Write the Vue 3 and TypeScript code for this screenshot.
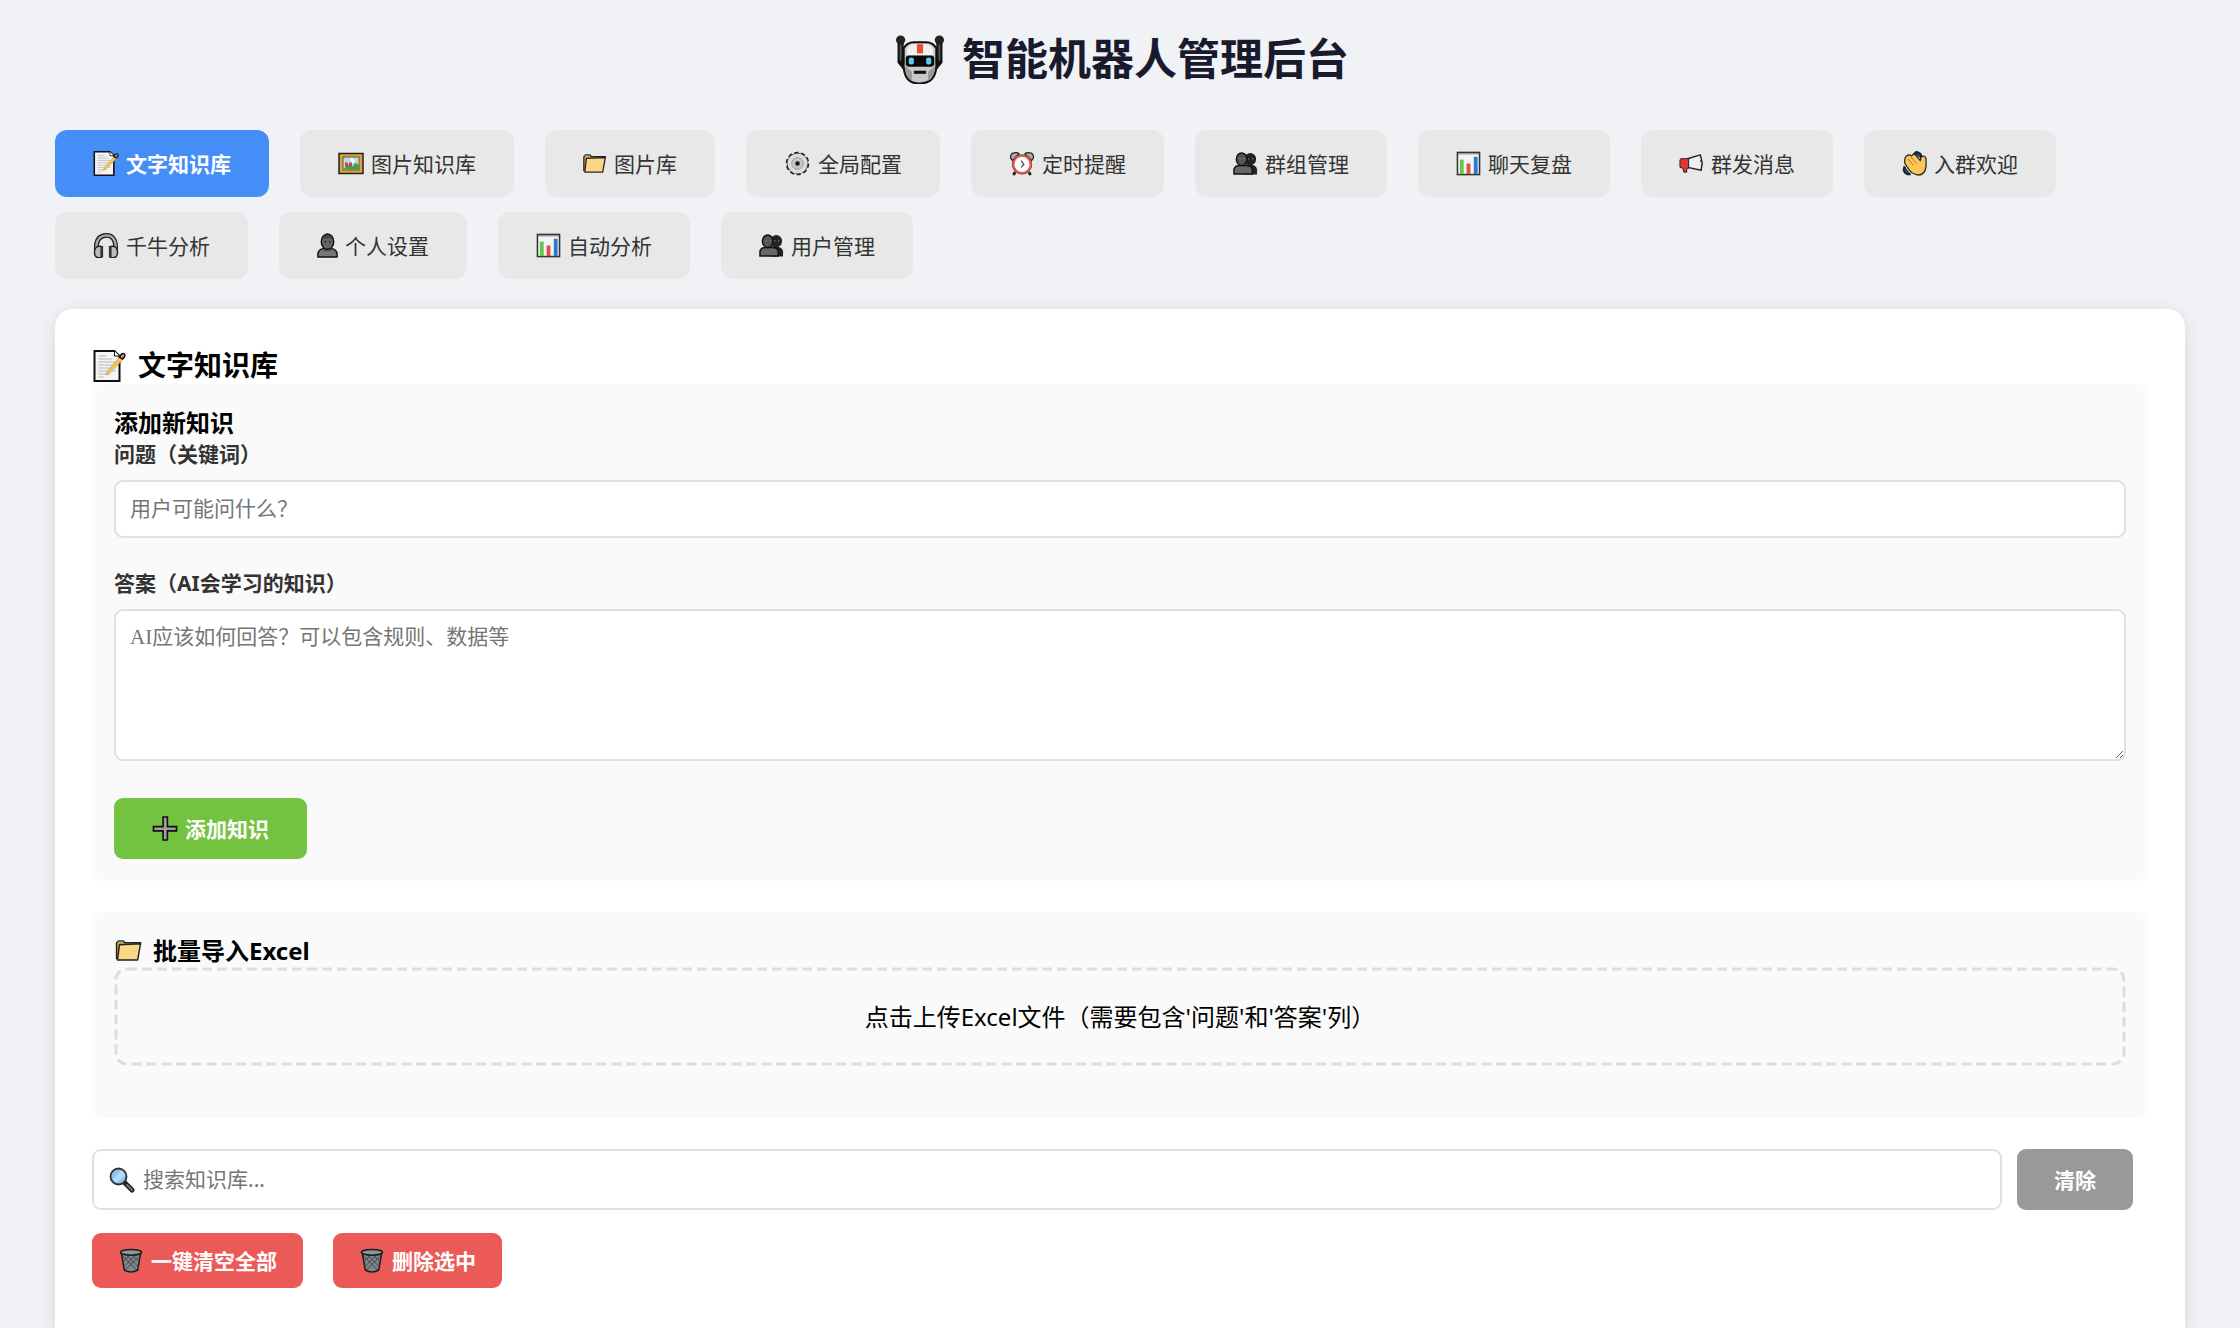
<script setup lang="ts">
import { ref } from 'vue'

interface Tab {
  id: string
  label: string
  icon: string
  width: number
}

const tabs: Tab[] = [
  { id: 'text', label: '文字知识库', icon: 'memo', width: 26 },
  { id: 'image', label: '图片知识库', icon: 'picture', width: 26 },
  { id: 'gallery', label: '图片库', icon: 'folder', width: 24 },
  { id: 'config', label: '全局配置', icon: 'gear', width: 27 },
  { id: 'timer', label: '定时提醒', icon: 'clock', width: 26 },
  { id: 'groups', label: '群组管理', icon: 'people', width: 25 },
  { id: 'review', label: '聊天复盘', icon: 'chart', width: 25 },
  { id: 'broadcast', label: '群发消息', icon: 'megaphone', width: 25 },
  { id: 'welcome', label: '入群欢迎', icon: 'wave', width: 25 },
  { id: 'qianniu', label: '千牛分析', icon: 'headphone', width: 26 },
  { id: 'profile', label: '个人设置', icon: 'person', width: 21 },
  { id: 'auto', label: '自动分析', icon: 'chart', width: 25 },
  { id: 'users', label: '用户管理', icon: 'people', width: 25 },
]

const active = ref('text')
const question = ref('')
const answer = ref('')
const keyword = ref('')
</script>

<template>
  <svg class="sprite" aria-hidden="true">
    <symbol id="robot" viewBox="0 0 48 48">
      <path d="M5 6v20l5 6M43 6v20l-5 6" fill="none" stroke="#111" stroke-width="6" />
      <path d="M5 8v17M43 8v17" stroke="#555" stroke-width="2" />
      <circle cx="5" cy="5" r="4.500" fill="#222" /><circle cx="43" cy="5" r="4.500" fill="#222" />
      <path d="M8 13q3-6 10-6h12q7 0 10 6v18q-1 16-16 16.500T8 31z" fill="#c9c9c9" stroke="#111" stroke-width="2" />
      <path d="M11 14q3-5 7-5h12q4 0 7 5v6H11z" fill="#f2f2f2" />
      <path d="M9 30l7 6v9q-6-3-7-15zM39 30l-7 6v9q6-3 7-15z" fill="#999" />
      <path d="M21 9h6v9h-6z" fill="#e8502e" />
      <rect x="10" y="20" width="28" height="11" rx="3" fill="#0a0a0a" />
      <rect x="13" y="22" width="5" height="7" rx="2" fill="#5cc9f5" /><rect x="30" y="22" width="5" height="7" rx="2" fill="#5cc9f5" />
      <rect x="18" y="35" width="12" height="3" fill="#111" />
    </symbol>
    <symbol id="memo" viewBox="0 0 32 32">
      <path d="M1 1h20l5 5v25H1z" fill="#f4f4f4" stroke="#111" stroke-width="2" />
      <path d="M5 6h8M5 9h14M5 12h17M5 15h17M5 18h17M5 21h17M5 24h12M5 27h5" stroke="#b5b5b5" stroke-width="1" />
      <path d="M21 1v5h5" fill="#fff" stroke="#111" />
      <path d="M12 25l2-4L27 6l3 3-14 14z" fill="#f6c452" stroke="#c89a3a" stroke-width=".6" />
      <path d="M26 7l2-3q2-1 3 0t0 3l-2 2z" fill="#c9958f" stroke="#111" stroke-width="1.500" />
    </symbol>
    <symbol id="picture" viewBox="0 0 26 24">
      <rect x="1" y="2" width="24" height="20" fill="#d9a53c" stroke="#222" stroke-width="1.500" />
      <rect x="5" y="5.500" width="16" height="13" fill="#b9dcf0" stroke="#6d5a2e" stroke-width="1" />
      <path d="M5.500 18l4-5 5 2 3-4 3.500 3v4.500z" fill="#4f9b45" />
      <path d="M7 11h3v4H7zM11 11h3v4h-3z" fill="#c24a3a" /><path d="M12 8l2-2 3 4-2 2z" fill="#fff" />
    </symbol>
    <symbol id="folder" viewBox="0 0 28 24">
      <path d="M1 21V4l2-2h5l2 2h16v2" fill="#e0a63c" stroke="#222" stroke-width="1.500" />
      <path d="M2 2.500h6" stroke="#3c7fb0" stroke-width="1.500" />
      <path d="M4 6l22-1-3 17H2z" fill="#fad784" stroke="#222" stroke-width="1.500" stroke-linejoin="round" />
    </symbol>
    <symbol id="gear" viewBox="0 0 26 26">
      <circle cx="13" cy="13" r="11" fill="#222" stroke="#222" stroke-width="2.500" stroke-dasharray="4.300 2.600" />
      <circle cx="13" cy="13" r="10.500" fill="#dcdcdc" />
      <circle cx="13" cy="13" r="6" fill="#c8c8c8" stroke="#999" />
      <circle cx="13" cy="13" r="2.400" fill="#111" stroke="#777" />
    </symbol>
    <symbol id="clock" viewBox="0 0 26 26">
      <path d="M6 22l-2 3M20 22l2 3" stroke="#222" stroke-width="3" />
      <path d="M1 7q0-5 4-5 3-1 5 1L3 10zM25 7q0-5-4-5-3-1-5 1l7 7z" fill="#aaa" stroke="#222" stroke-width="1.300" />
      <circle cx="13" cy="14" r="10" fill="#fff" stroke="#222" stroke-width="1" />
      <circle cx="13" cy="14" r="9" fill="#fff" stroke="#e5573c" stroke-width="2.200" />
      <path d="M12 10l3 4-3 3" fill="none" stroke="#444" stroke-width="1.300" />
    </symbol>
    <symbol id="people" viewBox="0 0 26 24">
      <path d="M12 23.500V13q12-1 13 5v5.500z" fill="#222" /><ellipse cx="18" cy="7.500" rx="6" ry="6.500" fill="#222" />
      <path d="M1 23v-5q1-4 6-4h7q5 0 6 4v5z" fill="#666" stroke="#111" stroke-width="1.500" />
      <ellipse cx="9" cy="7.500" rx="5.500" ry="6.500" fill="#555" stroke="#111" stroke-width="1.500" />
      <path d="M7 7h1M11 7h1M16 7h1M20 7h1" stroke="#888" stroke-width="1.500" />
    </symbol>
    <symbol id="person" viewBox="0 0 22 26">
      <path d="M1 25v-4q1-4 6-5h8q5 1 6 5v4z" fill="#777" stroke="#111" stroke-width="1.500" />
      <path d="M7 14h8v5H7z" fill="#555" />
      <ellipse cx="11" cy="9" rx="6.500" ry="8" fill="#666" stroke="#111" stroke-width="1.500" />
      <path d="M5 7q2-5 6-5t6 5q-6-3-12 0z" fill="#444" /><path d="M8 9h1.500M12.500 9H14" stroke="#111" stroke-width="1.500" />
    </symbol>
    <symbol id="chart" viewBox="0 0 26 26">
      <rect x="1.500" y="1.500" width="23" height="23" fill="#f4f4f4" stroke="#333" stroke-width="1.600" />
      <path d="M2 3h22" stroke="#777" stroke-width="1" />
      <path d="M4 9h4v15H4z" fill="#5ccb4b" /><path d="M11 13h4v11h-4z" fill="#e0523a" /><path d="M18.500 6h4v18h-4z" fill="#2f77d0" />
    </symbol>
    <symbol id="megaphone" viewBox="0 0 26 24">
      <path d="M9 7l13-4q3 8 1 16L9 16z" fill="#eee" stroke="#222" stroke-width="1.500" stroke-linejoin="round" />
      <path d="M2 7h8v10H8v4H5l-1-4-3-1V8z" fill="#e3342f" stroke="#222" stroke-width="1" />
      <path d="M22 9q4 2 1 5" fill="#ccc" stroke="#222" stroke-width="1.300" />
    </symbol>
    <symbol id="wave" viewBox="0 0 26 26">
      <path d="M12 4l3-3 4 2 2 5M3 16q-3 6 3 8l3 0" fill="#2f5161" stroke="#17262d" stroke-width="2.500" />
      <path d="M3 13q-1-6 2-8 2-2 5 0 2-3 5 0l4 5 1-4q4-2 5 2v8q-1 9-8 9-7-1-10-6z" fill="#fbc658" stroke="#222" stroke-width="1.300" stroke-linejoin="round" />
      <path d="M6 8l6 7M9 6l6 7" stroke="#a8792c" stroke-width="1" />
    </symbol>
    <symbol id="headphone" viewBox="0 0 26 26">
      <path d="M3 19V13q1-10 10-10.500T23 13v6" fill="none" stroke="#222" stroke-width="5" />
      <path d="M3 19V13q1-10 10-10.500T23 13v6" fill="none" stroke="#ababab" stroke-width="2.400" />
      <path d="M8 14q-7-1-7 6t7 5.500zM18 14q7-1 7 6t-7 5.500z" fill="#bbb" stroke="#222" stroke-width="1.500" />
      <path d="M8 13.500h2v12H8zM16 13.500h2v12h-2z" fill="#333" />
    </symbol>
    <symbol id="plus" viewBox="0 0 26 26">
      <path d="M11 1h4.500v10H25v4.500h-9.500V25H11v-9.500H1V11h10z" fill="#a0a0a0" stroke="#111" stroke-width="1.700" />
    </symbol>
    <symbol id="search" viewBox="0 0 26 26">
      <path d="M15 15l8 8" stroke="#222" stroke-width="5" stroke-linecap="round" />
      <path d="M18 18l5 5" stroke="#777" stroke-width="2" stroke-linecap="round" />
      <circle cx="9.500" cy="9.500" r="8" fill="#8fc3f0" stroke="#333" stroke-width="1.800" />
      <path d="M4 12L12 3.500q4 2 4 5L8 15.500q-3-1-4-3.500z" fill="#b5d9f7" />
    </symbol>
    <symbol id="trash" viewBox="0 0 26 26">
      <path d="M3 5l3 18q7 4 14 0l3-18z" fill="#7d878b" stroke="#1b1b1b" stroke-width="1.600" />
      <path d="M5 9l14 14M9 8l12 12M15 8l7 7M21 9L7 23M17 8L5 20M11 8l-6 6" stroke="#3c4447" stroke-width="1" />
      <ellipse cx="13" cy="4.500" rx="11" ry="3" fill="#8c979b" stroke="#1b1b1b" stroke-width="1.600" />
    </symbol>
  </svg>

  <div class="page">
    <h1 class="title"><svg class="title-icon"><use href="#robot" /></svg>智能机器人管理后台</h1>

    <nav class="tabs">
      <button
        v-for="tab in tabs"
        :key="tab.id"
        type="button"
        class="tab"
        :class="{ active: tab.id === active }"
        @click="active = tab.id"
      >
        <svg class="icon" :style="{ width: tab.width + 'px' }"><use :href="'#' + tab.icon" /></svg>{{ tab.label }}
      </button>
    </nav>

    <main class="card">
      <h2 class="card-title"><svg class="card-icon"><use href="#memo" /></svg>文字知识库</h2>

      <section class="section">
        <h3 class="section-title">添加新知识</h3>
        <label class="label" for="question">问题（关键词）</label>
        <input id="question" v-model="question" class="field" type="text" placeholder="用户可能问什么？" />
        <label class="label" for="answer">答案（AI会学习的知识）</label>
        <textarea id="answer" v-model="answer" class="field area" placeholder="AI应该如何回答？可以包含规则、数据等"></textarea>
        <button type="button" class="btn add"><svg class="icon"><use href="#plus" /></svg>添加知识</button>
      </section>

      <section class="section">
        <h3 class="section-title"><svg class="section-icon"><use href="#folder" /></svg>批量导入Excel</h3>
        <label class="upload">
          <svg class="outline" aria-hidden="true"><rect class="dashes" rx="11" /></svg>
          <input class="file" type="file" accept=".xlsx,.xls" />
          点击上传Excel文件（需要包含'问题'和'答案'列）
        </label>
      </section>

      <div class="search-row">
        <div class="search-box">
          <svg class="search-icon"><use href="#search" /></svg>
          <input v-model="keyword" class="field search" type="text" aria-label="搜索知识库" placeholder="搜索知识库..." />
        </div>
        <button type="button" class="btn clear" @click="keyword = ''">清除</button>
      </div>

      <div class="actions">
        <button type="button" class="btn danger"><svg class="icon"><use href="#trash" /></svg>一键清空全部</button>
        <button type="button" class="btn danger"><svg class="icon"><use href="#trash" /></svg>删除选中</button>
      </div>
    </main>
  </div>
</template>

<style>
body {
  background: #f0f2f5;
}
</style>

<style scoped>
* {
  box-sizing: border-box;
  margin: 0;
}
.sprite {
  position: absolute;
  width: 0;
  height: 0;
}
.page {
  padding: 29px 55px 0;
  font-family: "Noto Sans", "Noto Sans CJK SC", sans-serif;
  font-size: 24px;
  color: #000;
}
.title {
  display: flex;
  align-items: center;
  justify-content: center;
  gap: 17px;
  margin-bottom: 41px;
  padding-left: 4px;
  font-size: 43px;
  line-height: 60px;
  color: #1a1a2e;
}
.title-icon {
  width: 50px;
  height: 49px;
}
.tabs {
  display: flex;
  flex-wrap: wrap;
  gap: 15px 31px;
  margin-bottom: 30px;
}
.tab,
.btn {
  display: flex;
  align-items: center;
  justify-content: center;
  gap: 7px;
  border: 0;
  border-radius: 9px;
  font-family: inherit;
  font-size: 21px;
  line-height: 30px;
  white-space: nowrap;
  cursor: pointer;
}
.tab {
  height: 67px;
  padding: 0 38px;
  border-radius: 12px;
  background: #e8e8e8;
  color: #333;
}
.tab.active {
  background: #458ef7;
  color: #fff;
  font-weight: 700;
}
.icon {
  width: 26px;
  height: 25px;
}
.card {
  padding: 38px 37px 60px;
  border-radius: 18px;
  background: #fff;
  box-shadow: 0 3px 18px rgba(0, 0, 0, 0.1);
}
.card-title {
  display: flex;
  align-items: center;
  gap: 11px;
  font-size: 28px;
  line-height: 37px;
}
.card-icon {
  width: 35px;
  height: 32px;
}
.section {
  margin-bottom: 31px;
  padding: 22px;
  border-radius: 12px;
  background: #fafafa;
}
.section-title {
  display: flex;
  align-items: center;
  gap: 9px;
  font-size: 24px;
  line-height: 33px;
}
.section-icon {
  width: 30px;
  height: 23px;
}
.label {
  display: block;
  margin-bottom: 11px;
  font-size: 21px;
  font-weight: 700;
  line-height: 30px;
  color: #333;
}
.field {
  display: block;
  width: 100%;
  height: 58px;
  margin-bottom: 30px;
  padding: 0 14px 2px;
  border: 2px solid #e0e0e0;
  border-radius: 9px;
  background: #fff;
  font-family: inherit;
  font-size: 21px;
}
.field::placeholder {
  color: #757575;
}
.area {
  height: 152px;
  margin-bottom: 37px;
  padding: 11px 14px;
  font-family: "Liberation Serif", "Noto Sans CJK SC", serif;
  line-height: 30px;
  resize: vertical;
}
.btn {
  height: 61px;
  padding: 0 38px;
  color: #fff;
  font-weight: 700;
}
.add {
  background: #73c341;
}
.upload {
  display: block;
  position: relative;
  margin-bottom: 30px;
  padding: 33px;
  line-height: 33px;
  text-align: center;
  cursor: pointer;
}
.outline {
  position: absolute;
  inset: 0;
  width: 100%;
  height: 100%;
}
.dashes {
  x: 2px;
  y: 2px;
  width: calc(100% - 4px);
  height: calc(100% - 4px);
  fill: none;
  stroke: #ddd;
  stroke-width: 3px;
  stroke-dasharray: 10 5;
}
.file {
  position: absolute;
  width: 1px;
  height: 1px;
  opacity: 0;
}
.search-row {
  display: flex;
  gap: 15px;
  margin: 0 15px 23px 0;
}
.search-box {
  position: relative;
  flex: 1;
}
.search-icon {
  position: absolute;
  top: 18px;
  left: 17px;
  width: 26px;
  height: 26px;
}
.search {
  height: 61px;
  margin-bottom: 0;
  padding-left: 49px;
}
.clear {
  padding: 0 37px;
  background: #999;
}
.actions {
  display: flex;
  gap: 30px;
}
.danger {
  height: 55px;
  padding: 0 26px;
  background: #eb5a56;
}
</style>
